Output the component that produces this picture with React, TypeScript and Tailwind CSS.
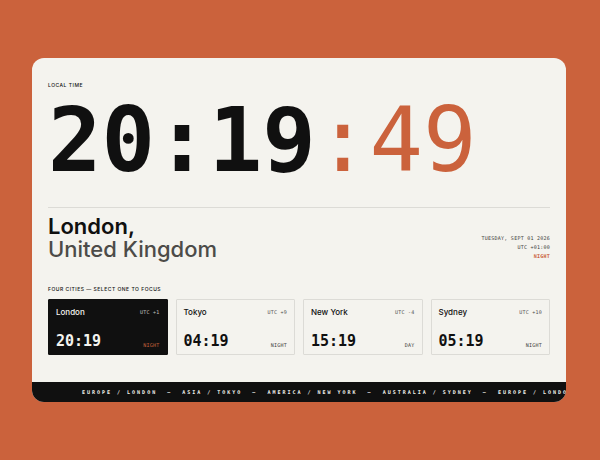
import { useState } from 'react';

interface City {
  name: string;
  offset: string;
  time: string;
  period: string;
}

const cities: City[] = [
  { name: 'London', offset: 'UTC +1', time: '20:19', period: 'NIGHT' },
  { name: 'Tokyo', offset: 'UTC +9', time: '04:19', period: 'NIGHT' },
  { name: 'New York', offset: 'UTC -4', time: '15:19', period: 'DAY' },
  { name: 'Sydney', offset: 'UTC +10', time: '05:19', period: 'NIGHT' },
];

const zones = [
  'EUROPE / LONDON',
  'ASIA / TOKYO',
  'AMERICA / NEW YORK',
  'AUSTRALIA / SYDNEY',
  'EUROPE / LONDON',
];

export default function App() {
  const [selected, setSelected] = useState('London');

  return (
    <main className="flex min-h-screen items-center bg-[#cb623c] pl-8 pr-[34px] font-['Inter',sans-serif] text-[#101010]">
      <div className="w-full min-w-0 overflow-hidden rounded-xl bg-[#f4f3ee]">
        <div className="px-4 pt-6 pb-[27px]">
          {/* Clock */}
          <section className="border-b border-[#dcdbd6] pb-[23px]">
            <h2 className="text-[5px] leading-[6px] font-medium tracking-widest">LOCAL TIME</h2>
            <time className="mt-2 block whitespace-nowrap font-['DejaVu_Sans_Mono',monospace] text-[89px] leading-[88px] font-bold">
              20:19<span className="font-normal text-[#cb623c]">:49</span>
            </time>
          </section>

          {/* Location */}
          <section className="flex items-end justify-between pt-[7px]">
            <h1 className="text-[22px] leading-[23px] font-semibold">
              London,
              <span className="block font-medium text-[#4c4b48]">United Kingdom</span>
            </h1>
            <div className="text-right font-['DejaVu_Sans_Mono',monospace] text-[5px] leading-[9px] tracking-wider text-[#3c3b39]">
              <p>TUESDAY, SEPT 01 2026</p>
              <p>UTC +01:00</p>
              <p className="font-bold text-[#cb623c]">NIGHT</p>
            </div>
          </section>

          {/* City picker */}
          <section className="pt-[25px]">
            <h2 className="text-[5px] leading-[6px] font-medium tracking-widest">
              FOUR CITIES — SELECT ONE TO FOCUS
            </h2>
            <div className="mt-[7px] grid grid-cols-4 gap-2">
              {cities.map((city) => {
                const active = city.name === selected;
                return (
                  <button
                    key={city.name}
                    type="button"
                    aria-pressed={active}
                    onClick={() => setSelected(city.name)}
                    className={`flex h-14 flex-col justify-between rounded-[1px] border px-[7px] pt-[7px] pb-[5px] text-left ${
                      active
                        ? 'border-[#101010] bg-[#101010] text-[#f4f3ee]'
                        : 'border-[#dcdbd6]'
                    }`}
                  >
                    <span className="flex w-full items-center justify-between">
                      <span className="text-[8px] leading-[10px] font-medium">{city.name}</span>
                      <span className="font-['DejaVu_Sans_Mono',monospace] text-[5px] leading-[10px] tracking-wider opacity-75">
                        {city.offset}
                      </span>
                    </span>
                    <span className="flex w-full items-end justify-between">
                      <span className="font-['DejaVu_Sans_Mono',monospace] text-[15px] leading-4 font-bold">
                        {city.time}
                      </span>
                      <span
                        className={`font-['DejaVu_Sans_Mono',monospace] text-[5px] leading-2 tracking-wider ${
                          active ? 'text-[#cb623c]' : 'text-[#3c3b39]'
                        }`}
                      >
                        {city.period}
                      </span>
                    </span>
                  </button>
                );
              })}
            </div>
          </section>
        </div>

        <footer className="flex overflow-hidden bg-[#101010] pl-[50px] font-['DejaVu_Sans_Mono',monospace] text-[5px] leading-5 font-bold tracking-[2px] whitespace-pre text-[#f4f3ee]">
          {zones.map((zone, index) => (
            <span key={index}>{`${zone}  —  `}</span>
          ))}
        </footer>
      </div>
    </main>
  );
}
